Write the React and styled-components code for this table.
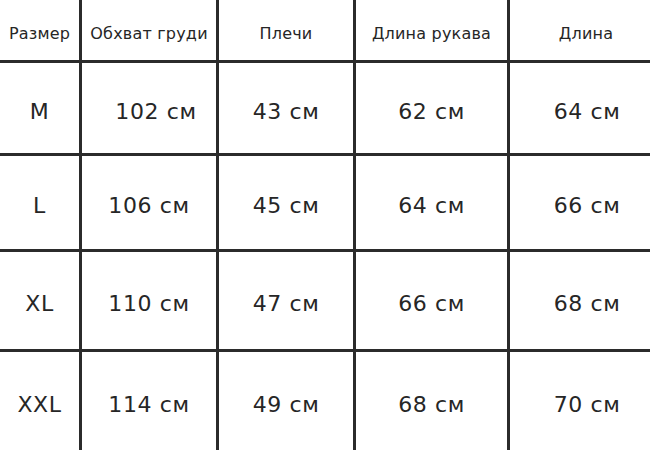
import React from 'react';
import styled, { createGlobalStyle } from 'styled-components';

const GlobalStyle = createGlobalStyle`
  html, body {
    margin: 0;
    padding: 0;
    background: #ffffff;
  }
  body {
    font-family: "DejaVu Sans", "Liberation Sans", sans-serif;
    color: #262626;
  }
`;

const headers = ['Размер', 'Обхват груди', 'Плечи', 'Длина рукава', 'Длина'];

const rows = [
  ['M', '102 см', '43 см', '62 см', '64 см'],
  ['L', '106 см', '45 см', '64 см', '66 см'],
  ['XL', '110 см', '47 см', '66 см', '68 см'],
  ['XXL', '114 см', '49 см', '68 см', '70 см'],
];

// offsets to nudge a cell's text off the exact centre, as in the chart
const nudges = {
  '102 см': 14,
};

export default function App() {
  return (
    <>
      <GlobalStyle />
      <Chart>
        {headers.map((h, i) => (
          <HeadCell key={h} $col={i}>{h}</HeadCell>
        ))}
        {rows.map((row) =>
          row.map((value, i) => (
            <Cell key={row[0] + i} $col={i} $nudge={nudges[value] || 0}>
              {value}
            </Cell>
          ))
        )}
      </Chart>
    </>
  );
}

// --- STYLES ---
const Chart = styled.div`
  display: grid;
  grid-template-columns: 79px 134px 134px 151px 140px;
  grid-template-rows: 60px 90px 93px 97px 98px;
  gap: 3px;
  width: 650px;
  height: 450px;
  background: #2b2b2b;
`;

const HeadCell = styled.div`
  background: #ffffff;
  display: flex;
  align-items: center;
  justify-content: center;
  padding-top: 6px;
  padding-left: ${(p) => (p.$col === 4 ? 12 : 0)}px;
  font-size: 16px;
  letter-spacing: 0.2px;
  white-space: nowrap;
`;

const Cell = styled.div`
  background: #ffffff;
  display: flex;
  align-items: center;
  justify-content: center;
  padding-top: 6px;
  padding-left: ${(p) => (p.$col === 4 ? 14 : p.$nudge)}px;
  font-size: 22px;
  letter-spacing: 0.6px;
  white-space: nowrap;
`;
